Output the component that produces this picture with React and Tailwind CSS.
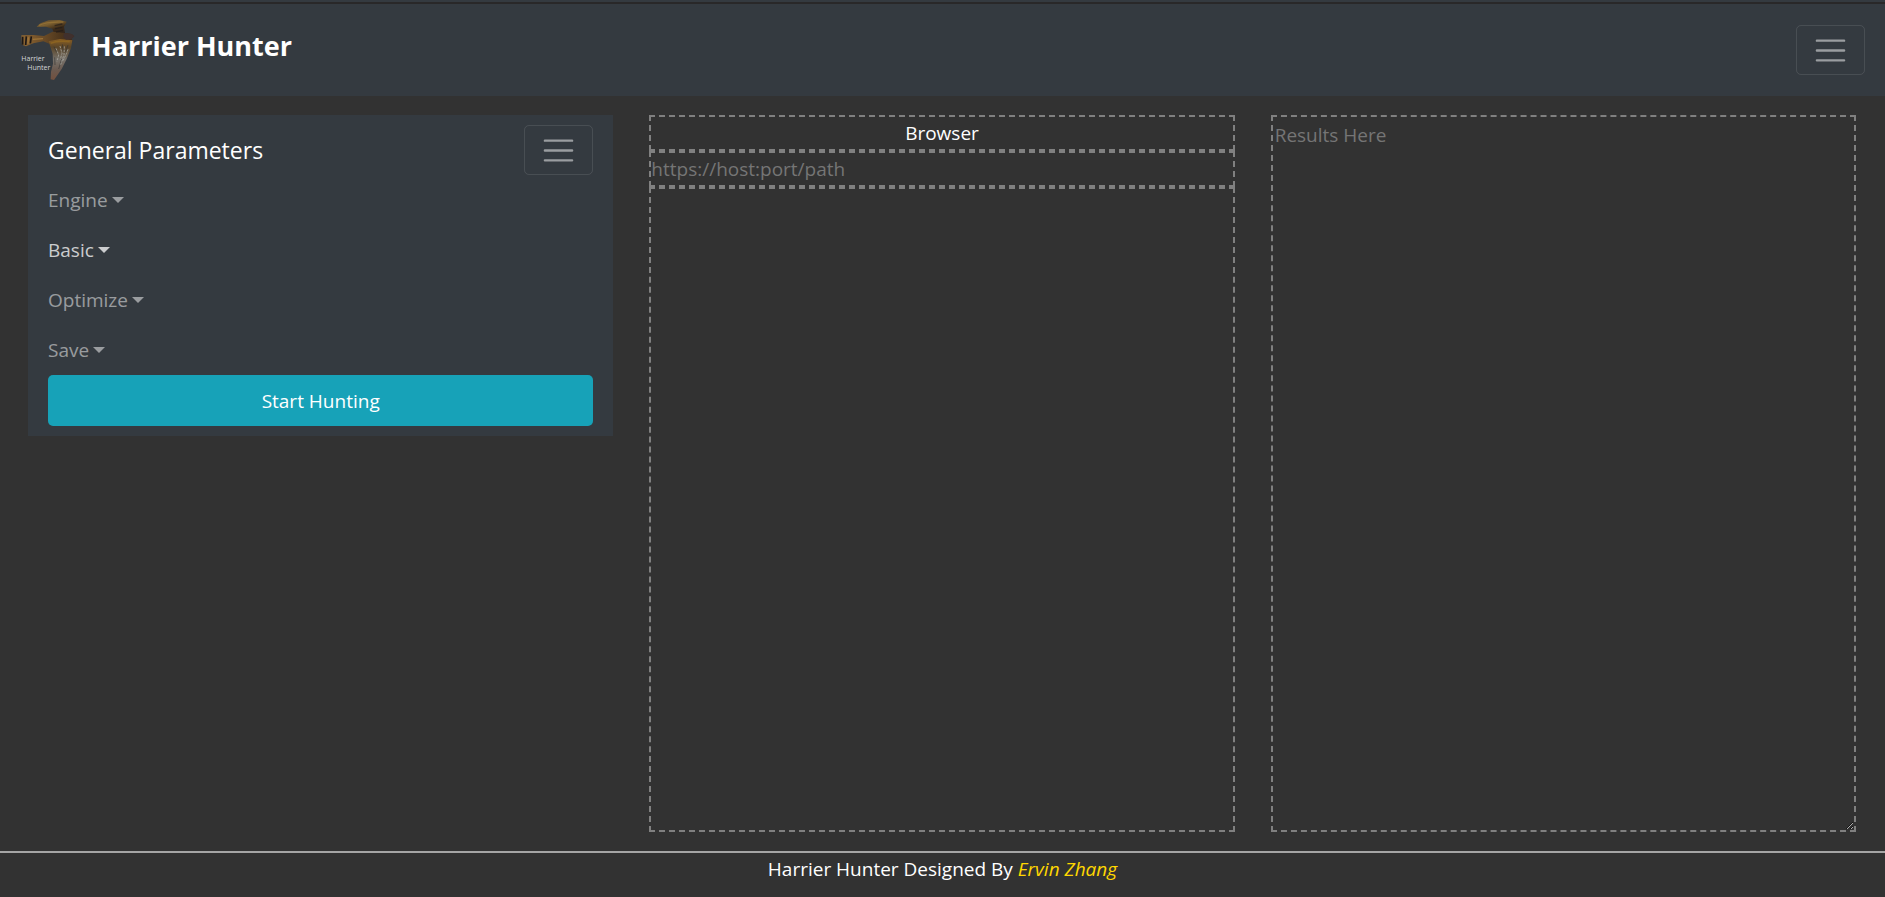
const MENU = [
  { label: 'Engine' },
  { label: 'Basic', active: true },
  { label: 'Optimize' },
  { label: 'Save' },
];

function HarrierLogo() {
  return (
    <svg viewBox="60 57 168 186" className="h-[62px] w-[56px]" role="img" aria-label="Harrier Hunter logo">
      <defs>
        <linearGradient id="tail" x1="0" x2="1">
          <stop offset="0" stopColor="#8f6734" />
          <stop offset="0.4" stopColor="#6d4d27" />
          <stop offset="0.75" stopColor="#4c351c" />
          <stop offset="1" stopColor="#3c2b22" />
        </linearGradient>
        <linearGradient id="upper" x1="0" y1="0" x2="0.5" y2="1">
          <stop offset="0" stopColor="#5f4a2c" />
          <stop offset="0.35" stopColor="#7d6030" />
          <stop offset="0.65" stopColor="#3b2a18" />
          <stop offset="1" stopColor="#30241c" />
        </linearGradient>
        <linearGradient id="lower" x1="0" y1="0" x2="0" y2="1">
          <stop offset="0" stopColor="#8a5f23" />
          <stop offset="0.2" stopColor="#5a4528" />
          <stop offset="0.5" stopColor="#77726b" />
          <stop offset="0.75" stopColor="#6b5a50" />
          <stop offset="1" stopColor="#73503e" />
        </linearGradient>
      </defs>
      <path d="M110 80 L121 70 L146 61 L178 60 L200 65 L192 80 L196 104 L180 112 L150 110 L161 98 L157 86 L138 80 Z" fill="url(#upper)" />
      <path d="M64 106 L100 105 L132 108 L158 95 L185 98 L204 100 L216 103 L223 109 L215 116 L218 124 L210 130 L180 136 L150 132 L130 124 L100 130 L78 139 L66 134 Z" fill="url(#tail)" />
      <path d="M146 124 L180 117 L217 121 L213 144 L200 177 L185 207 L162 240 L152 238 L153 215 L159 191 L158 162 Z" fill="url(#lower)" />
      <path d="M117 76 C140 64 168 67 190 66" fill="none" stroke="#a07c38" strokeWidth="4" opacity="0.6" />
      <path d="M164 77 L187 72 M165 86 L187 82 M168 96 L189 91" stroke="#241d19" strokeWidth="4" opacity="0.7" />
      <path d="M68 110 L68 134 M79 109 L77 135 M94 109 L91 130" stroke="#1d1816" strokeWidth="5" />
      <path d="M85 112 L84 131 M98 118 L129 116" stroke="#a87d3c" strokeWidth="4" opacity="0.8" />
      <path d="M152 130 C173 121 190 123 209 125" fill="none" stroke="#94691f" strokeWidth="5" opacity="0.7" />
      <path d="M192 100 L213 101 L223 108 L214 117 L198 119 L190 110 Z" fill="#40302d" />
      <path d="M162 140 L170 157 M187 133 L190 155 M204 135 L196 157 M164 172 L165 195 M185 177 L176 207" fill="none" stroke="#32302e" strokeWidth="3" opacity="0.6" />
      <path d="M168 145 L176 165 L171 184 M180 138 L186 160 L181 178 M193 139 L192 164 L182 194 M204 148 L200 160 L188 184" fill="none" stroke="#a9a7a0" strokeWidth="3" strokeDasharray="7 3" opacity="0.8" />
      <text x="64" y="183" fontSize="21" fill="#d4d6d8" className="font-['Open_Sans',sans-serif]">Harrier</text>
      <text x="82" y="210" fontSize="21" fill="#d4d6d8" className="font-['Open_Sans',sans-serif]">Hunter</text>
    </svg>
  );
}

function Toggler({ label }) {
  return (
    <button
      type="button"
      aria-label={label}
      className="flex h-[50px] w-[69px] items-center justify-center rounded-[5px] border border-white/10"
    >
      <svg viewBox="0 0 30 30" className="size-[37px]" aria-hidden="true">
        <path stroke="rgba(255,255,255,.5)" strokeWidth="2" strokeLinecap="round" d="M4 7h22M4 15h22M4 23h22" />
      </svg>
    </button>
  );
}

function MenuItem({ label, active }) {
  return (
    <li>
      <a
        href={`#${label.toLowerCase()}`}
        className={`flex h-[50px] items-center gap-1 ${active ? 'text-white/75' : 'text-white/50'}`}
      >
        {label}
        <span className="border-x-[6px] border-t-[6px] border-x-transparent border-t-current" />
      </a>
    </li>
  );
}

export default function App() {
  return (
    <div className="flex min-h-screen flex-col bg-[#323232] font-['Open_Sans','Noto_Sans',sans-serif] text-[19px] leading-8 text-white">
      <header className="flex items-center justify-between border-t-2 border-[#343a40] bg-[#343a40] px-5 pt-[2px] shadow-[inset_0_2px_0_#292829]">
        <a href="#home" className="flex items-center gap-[15px] py-[15px]">
          <HarrierLogo />
          <span className="pb-2 text-[27px] leading-9 font-bold">Harrier Hunter</span>
        </a>
        <Toggler label="Toggle navigation" />
      </header>

      <main className="grid flex-1 grid-cols-3 gap-9 py-[19px] pr-[29px] pl-7">
        <section className="self-start bg-[#343a40] px-5 py-[10px]">
          <div className="flex items-center justify-between">
            <h1 className="text-[23px]">General Parameters</h1>
            <Toggler label="Toggle parameters" />
          </div>
          <nav>
            <ul>
              {MENU.map((item) => (
                <MenuItem key={item.label} {...item} />
              ))}
            </ul>
          </nav>
          <button type="button" className="h-[51px] w-full rounded-[5px] bg-[#17a2b8]">
            Start Hunting
          </button>
        </section>

        <section className="flex flex-col">
          <h2 className="h-9 border-2 border-dashed border-[#808080] text-center">Browser</h2>
          <input
            type="text"
            aria-label="Target URL"
            placeholder="https://host:port/path"
            className="h-9 border-2 border-dashed border-[#808080] bg-transparent placeholder:text-[#757575]"
          />
          <div className="flex-1 border-2 border-dashed border-[#808080]" />
        </section>

        <textarea
          aria-label="Results"
          placeholder="Results Here"
          className="w-full border-2 border-dashed border-[#808080] bg-transparent p-[2px] placeholder:text-[#757575]"
        />
      </main>

      <footer className="h-[46px] border-t-2 border-[#a5a5a5] text-center">
        Harrier Hunter Designed By <em className="text-[#ffd700]">Ervin Zhang</em>
      </footer>
    </div>
  );
}
